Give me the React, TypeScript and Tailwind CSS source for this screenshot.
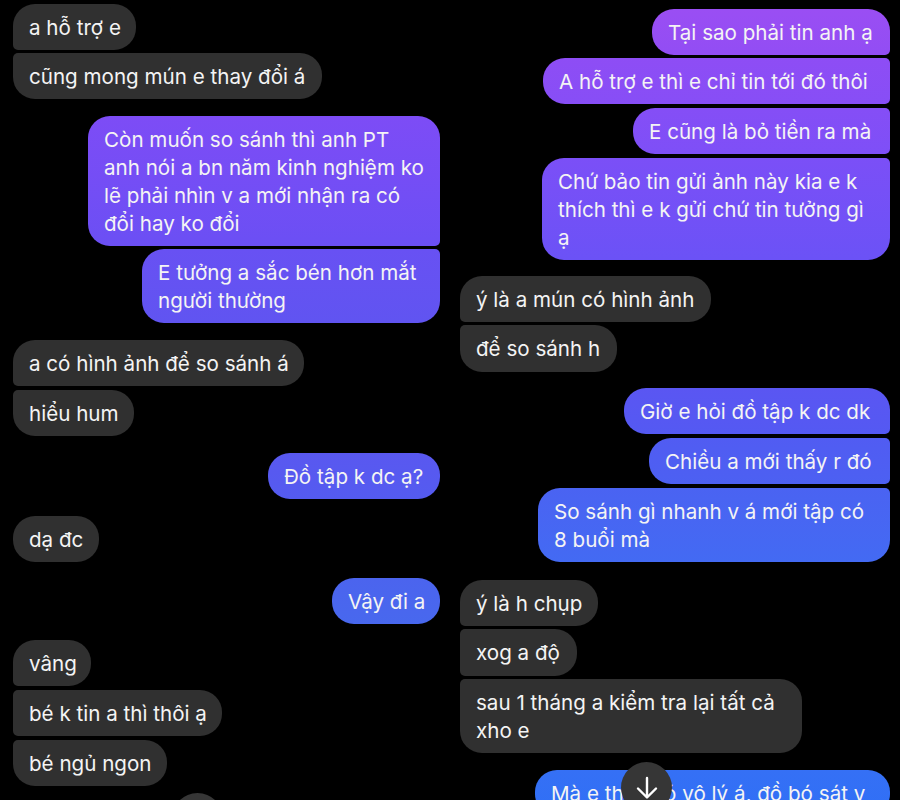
import { ReactNode } from "react";

type Msg = {
  lines: string[];
  out?: boolean;
  cls: string;
};

const GRAY = "bg-[#303030]";

// left phone screenshot
const leftMsgs: Msg[] = [
  { lines: ["a hỗ trợ e"], cls: `mt-0 w-[123px] ${GRAY} rounded-tl-[22px] rounded-tr-[22px] rounded-br-[22px] rounded-bl-[5px]` },
  { lines: ["cũng mong mún e thay đổi á"], cls: `mt-[3px] w-[309px] ${GRAY} rounded-tl-[5px] rounded-tr-[22px] rounded-br-[22px] rounded-bl-[22px]` },
  {
    out: true,
    lines: ["Còn muốn so sánh thì anh PT", "anh nói a bn năm kinh nghiệm ko", "lẽ phải nhìn v a mới nhận ra có", "đổi hay ko đổi"],
    cls: "mt-[17px] w-[352px] bg-linear-to-b from-[#7d4cf6] to-[#6b4ff4] rounded-tl-[22px] rounded-tr-[22px] rounded-br-[5px] rounded-bl-[22px]",
  },
  {
    out: true,
    lines: ["E tưởng a sắc bén hơn mắt", "người thường"],
    cls: "mt-[3px] w-[298px] bg-linear-to-b from-[#6851f3] to-[#6054f1] rounded-tl-[22px] rounded-tr-[5px] rounded-br-[22px] rounded-bl-[22px]",
  },
  { lines: ["a có hình ảnh để so sánh á"], cls: `mt-[17px] w-[291px] ${GRAY} rounded-tl-[22px] rounded-tr-[22px] rounded-br-[22px] rounded-bl-[5px]` },
  { lines: ["hiểu hum"], cls: `mt-[4px] w-[121px] ${GRAY} rounded-tl-[5px] rounded-tr-[22px] rounded-br-[22px] rounded-bl-[22px]` },
  { out: true, lines: ["Đồ tập k dc ạ?"], cls: "mt-[17px] w-[172px] bg-linear-to-b from-[#5958f0] to-[#545bf0] rounded-[22px]" },
  { lines: ["dạ đc"], cls: `mt-[17px] w-[86px] ${GRAY} rounded-[22px]` },
  { out: true, lines: ["Vậy đi a"], cls: "mt-[16px] w-[108px] bg-linear-to-b from-[#4b64ee] to-[#4868ee] rounded-[22px]" },
  { lines: ["vâng"], cls: `mt-[16px] w-[78px] ${GRAY} rounded-tl-[22px] rounded-tr-[22px] rounded-br-[22px] rounded-bl-[5px]` },
  { lines: ["bé k tin a thì thôi ạ"], cls: `mt-[4px] w-[209px] ${GRAY} rounded-tl-[5px] rounded-tr-[22px] rounded-br-[22px] rounded-bl-[5px]` },
  { lines: ["bé ngủ ngon"], cls: `mt-[4px] w-[154px] ${GRAY} rounded-tl-[5px] rounded-tr-[22px] rounded-br-[22px] rounded-bl-[22px]` },
  { out: true, lines: [""], cls: "mt-[14px] w-[217px] h-[46px] bg-[#2a4fc4] rounded-[22px]" },
];

// right phone screenshot
const rightMsgs: Msg[] = [
  { out: true, lines: ["Tại sao phải tin anh ạ"], cls: "mt-0 w-[238px] bg-linear-to-b from-[#9a4ef3] to-[#924df4] rounded-tl-[22px] rounded-tr-[22px] rounded-br-[5px] rounded-bl-[22px]" },
  { out: true, lines: ["A hỗ trợ e thì e chỉ tin tới đó thôi"], cls: "mt-[3px] w-[347px] bg-linear-to-b from-[#8e4df5] to-[#874ef6] rounded-tl-[22px] rounded-tr-[5px] rounded-br-[5px] rounded-bl-[22px]" },
  { out: true, lines: ["E cũng là bỏ tiền ra mà"], cls: "mt-[4px] w-[257px] bg-linear-to-b from-[#854ef6] to-[#7e4ff7] rounded-tl-[22px] rounded-tr-[5px] rounded-br-[5px] rounded-bl-[22px]" },
  {
    out: true,
    lines: ["Chứ bảo tin gửi ảnh này kia e k", "thích thì e k gửi chứ tin tưởng gì", "ạ"],
    cls: "mt-[4px] w-[348px] bg-linear-to-b from-[#7b4ff7] to-[#6b52f6] rounded-tl-[22px] rounded-tr-[5px] rounded-br-[22px] rounded-bl-[22px]",
  },
  { lines: ["ý là a mún có hình ảnh"], cls: `mt-[16px] w-[251px] ${GRAY} rounded-tl-[22px] rounded-tr-[22px] rounded-br-[22px] rounded-bl-[5px]` },
  { lines: ["để so sánh h"], cls: `mt-[3px] w-[157px] h-[47px] ${GRAY} rounded-tl-[5px] rounded-tr-[22px] rounded-br-[22px] rounded-bl-[22px]` },
  { out: true, lines: ["Giờ e hỏi đồ tập k dc dk"], cls: "mt-[16px] w-[266px] bg-linear-to-b from-[#5a56f2] to-[#5459f2] rounded-tl-[22px] rounded-tr-[22px] rounded-br-[5px] rounded-bl-[22px]" },
  { out: true, lines: ["Chiều a mới thấy r đó"], cls: "mt-[4px] w-[241px] bg-linear-to-b from-[#515cf2] to-[#4c60f2] rounded-tl-[22px] rounded-tr-[5px] rounded-br-[5px] rounded-bl-[22px]" },
  {
    out: true,
    lines: ["So sánh gì nhanh v á mới tập có", "8 buổi mà"],
    cls: "mt-[4px] w-[352px] bg-linear-to-b from-[#4a63f2] to-[#436af3] rounded-tl-[22px] rounded-tr-[5px] rounded-br-[22px] rounded-bl-[22px]",
  },
  { lines: ["ý là h chụp"], cls: `mt-[18px] w-[138px] ${GRAY} rounded-tl-[22px] rounded-tr-[22px] rounded-br-[22px] rounded-bl-[5px]` },
  { lines: ["xog a độ"], cls: `mt-[3px] w-[117px] h-[47px] ${GRAY} rounded-tl-[5px] rounded-tr-[22px] rounded-br-[22px] rounded-bl-[5px]` },
  { lines: ["sau 1 tháng a kiểm tra lại tất cả", "xho e"], cls: `mt-[3px] w-[342px] ${GRAY} rounded-tl-[5px] rounded-tr-[22px] rounded-br-[22px] rounded-bl-[22px]` },
  { out: true, lines: ["Mà e thấy có vô lý á, đồ bó sát v"], cls: "mt-[17px] w-[355px] bg-linear-to-b from-[#3570f5] to-[#2f6ff6] rounded-[22px]" },
];

function Bubble({ m }: { m: Msg }) {
  return (
    <div className={`${m.out ? "self-end" : "self-start"} ${m.cls} shrink-0 px-4 pt-[10px] pb-[8px] text-[20.6px] leading-[28px] text-[#f4f4f4] whitespace-nowrap`}>
      {m.lines.map((l, i) => (
        <div key={i}>{l}</div>
      ))}
    </div>
  );
}

function ScrollDown({ className }: { className: string }) {
  return (
    <div className={`absolute w-[51px] h-[51px] rounded-full bg-[#363636] flex items-center justify-center ${className}`}>
      <svg width="24" height="24" viewBox="0 0 24 24" fill="none" stroke="white" strokeWidth="2.4" strokeLinecap="round" strokeLinejoin="round">
        <path d="M12 2v19M3 12.5l9 9 9-9" />
      </svg>
    </div>
  );
}

function Column({ msgs, className, children }: { msgs: Msg[]; className: string; children?: ReactNode }) {
  return (
    <div className={`relative w-[450px] h-[800px] overflow-hidden flex flex-col ${className}`}>
      {msgs.map((m, i) => (
        <Bubble key={i} m={m} />
      ))}
      {children}
    </div>
  );
}

export default function App() {
  return (
    <div className="w-[900px] h-[800px] bg-black overflow-hidden flex font-['Inter','Noto_Sans',sans-serif]">
      <Column msgs={leftMsgs} className="pt-[4px] pl-[13px] pr-[10px]">
        <ScrollDown className="left-[172px] top-[793px]" />
      </Column>
      <Column msgs={rightMsgs} className="pt-[9px] pl-[10px] pr-[10px]">
        <ScrollDown className="left-[171px] top-[762px]" />
      </Column>
    </div>
  );
}
